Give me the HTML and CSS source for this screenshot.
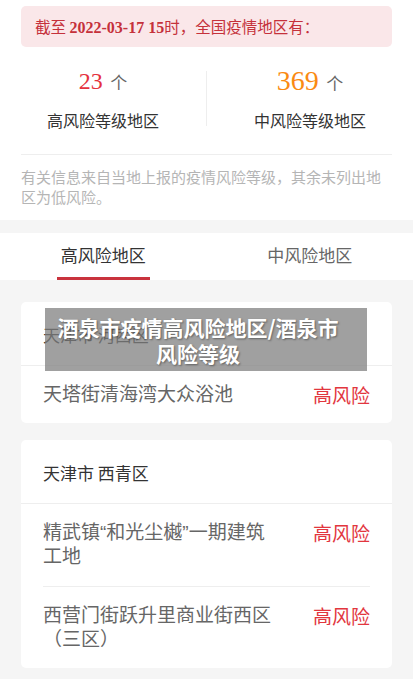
FILE: index.html
```html
<!DOCTYPE html>
<html lang="zh-CN">
<head>
    <meta charset="UTF-8">
    <meta name="viewport" content="width=device-width, initial-scale=1.0">
    <title>酒泉市疫情高风险地区</title>
    <link rel="stylesheet" href="styles.css">
</head>
<body>
    <div class="page">
        <div class="summary">
            <div class="notice">截至 <b class="date">2022-03-17 15</b>时，全国疫情地区有：</div>

            <div class="stats">
                <div class="stat">
                    <div class="stat-num"><span class="num high">23</span> <span class="unit">个</span></div>
                    <div class="stat-label">高风险等级地区</div>
                </div>
                <div class="stat-sep"></div>
                <div class="stat">
                    <div class="stat-num"><span class="num mid">369</span> <span class="unit">个</span></div>
                    <div class="stat-label">中风险等级地区</div>
                </div>
            </div>

            <p class="note">有关信息来自当地上报的疫情风险等级，其余未列出地区为低风险。</p>
        </div>

        <div class="tabs">
            <div class="tab active">高风险地区</div>
            <div class="tab">中风险地区</div>
        </div>

        <div class="list">
            <div class="card">
                <div class="card-head">天津市 河西区</div>
                <div class="row">
                    <div class="row-name">天塔街清海湾大众浴池</div>
                    <div class="row-level">高风险</div>
                </div>
            </div>

            <div class="card">
                <div class="card-head">天津市 西青区</div>
                <div class="row">
                    <div class="row-name">精武镇“和光尘樾”一期建筑工地</div>
                    <div class="row-level">高风险</div>
                </div>
                <div class="row">
                    <div class="row-name">西营门街跃升里商业街西区（三区）</div>
                    <div class="row-level">高风险</div>
                </div>
            </div>
        </div>

        <div class="caption">酒泉市疫情高风险地区/酒泉市风险等级</div>
    </div>
</body>
</html>
```

FILE: styles.css
```css
body {
    margin: 0;
    padding: 0;
    font-family: "Noto Sans CJK SC", "Noto Sans", sans-serif;
    background-color: #f5f5f5;
    color: #333;
}

.page {
    position: relative;
    min-height: 679px;
}

.summary {
    background: #fff;
    padding: 6px 21px 13px;
}

.notice {
    background-color: #fae7e9;
    color: #c5313b;
    border-radius: 5px;
    height: 41px;
    line-height: 41px;
    padding-left: 14px;
    font-size: 15.5px;
}

.date {
    font-family: "Liberation Serif", serif;
    font-weight: bold;
    font-size: 16px;
}

.stats {
    display: flex;
    margin: 19px -21px 0;
}

.stat {
    flex: 1;
    text-align: center;
}

.stat-sep {
    width: 1px;
    height: 55px;
    align-self: center;
    background-color: #eee;
}

.stat-num {
    height: 30px;
    line-height: 30px;
}

.num {
    font-family: "Liberation Serif", serif;
}

.num.high {
    color: #e5323e;
    font-size: 24px;
}

.num.mid {
    color: #fa8a12;
    font-size: 28px;
}

.unit {
    color: #666;
    font-size: 17px;
    margin-left: 4px;
}

.stat-label {
    margin-top: 13px;
    line-height: 22px;
    font-size: 16px;
    color: #333;
}

.note {
    margin: 23px 0 0;
    padding-top: 12px;
    border-top: 1px solid #eee;
    font-size: 15px;
    line-height: 20px;
    color: #b5b5b5;
}

.tabs {
    display: flex;
    background: #fff;
    margin-top: 13px;
    height: 47px;
}

.tab {
    flex: 1;
    text-align: center;
    font-size: 17px;
    line-height: 44px;
    color: #666;
}

.tab.active {
    color: #333;
}

.tab.active::after {
    content: "";
    display: block;
    width: 93px;
    height: 3px;
    margin: 0 auto;
    background-color: #c9333d;
}

.list {
    padding: 22px 21px 15px;
    display: flex;
    flex-direction: column;
    gap: 17px;
}

.card {
    background: #fff;
    border-radius: 5px;
}

.card-head {
    padding: 21px 22px 18px;
    font-size: 17px;
    line-height: 24px;
    color: #333;
    border-bottom: 1px solid #eee;
}

.row {
    display: flex;
    justify-content: space-between;
    align-items: flex-start;
    margin: 0 22px;
    padding: 17px 0;
    font-size: 19px;
    line-height: 24px;
}

.row + .row {
    border-top: 1px solid #eee;
}

.row:last-child {
    padding-bottom: 16px;
}

/* latin quotes stay narrow, CJK falls through */
.row-name {
    font-family: "Liberation Sans", "Noto Sans CJK SC", sans-serif;
    color: #666;
    width: 232px;
}

.row-level {
    color: #e2363e;
}

.caption {
    position: absolute;
    top: 308px;
    left: 45px;
    width: 322px;
    height: 63px;
    box-sizing: border-box;
    padding: 0 24px 0 8px;
    display: flex;
    align-items: center;
    justify-content: center;
    text-align: center;
    background-color: rgba(128, 128, 128, 0.75);
    color: #fff;
    font-weight: bold;
    font-size: 21px;
    line-height: 26px;
    text-shadow: 1px 1px 2px rgba(0, 0, 0, 0.4);
}
```
